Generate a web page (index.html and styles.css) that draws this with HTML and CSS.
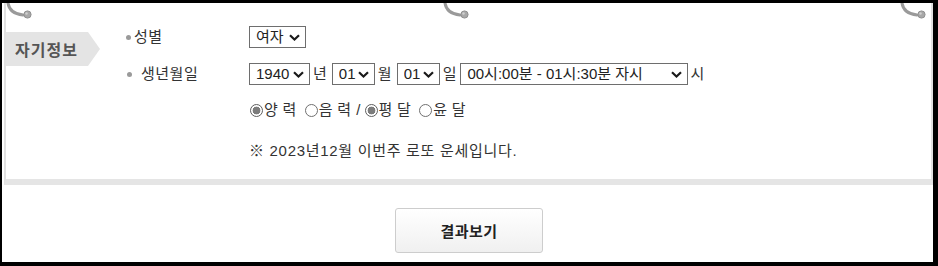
FILE: index.html
```html
<!DOCTYPE html>
<html lang="ko">
<head>
<meta charset="utf-8">
<title>자기정보</title>
<link rel="stylesheet" href="styles.css">
</head>
<body>
<div class="frame">
  <div class="panel">
    <svg class="hook hook-left" width="28" height="17" viewBox="0 0 28 17" aria-hidden="true">
      <path d="M2 0 C3 7 8 11 17 12" fill="none" stroke="#9a9a9a" stroke-width="3" stroke-linecap="round"/>
      <circle cx="21.5" cy="11.5" r="3.6" fill="#a8a8a8" stroke="#909090" stroke-width="1"/>
      <circle cx="20.5" cy="10.5" r="1.2" fill="#d0d0d0"/>
    </svg>
    <svg class="hook hook-mid" width="28" height="17" viewBox="0 0 28 17" aria-hidden="true">
      <path d="M2 0 C3 7 8 11 17 12" fill="none" stroke="#9a9a9a" stroke-width="3" stroke-linecap="round"/>
      <circle cx="21.5" cy="11.5" r="3.6" fill="#a8a8a8" stroke="#909090" stroke-width="1"/>
      <circle cx="20.5" cy="10.5" r="1.2" fill="#d0d0d0"/>
    </svg>
    <svg class="hook hook-right" width="28" height="17" viewBox="0 0 28 17" aria-hidden="true">
      <path d="M2 0 C3 7 8 11 17 12" fill="none" stroke="#9a9a9a" stroke-width="3" stroke-linecap="round"/>
      <circle cx="21.5" cy="11.5" r="3.6" fill="#a8a8a8" stroke="#909090" stroke-width="1"/>
      <circle cx="20.5" cy="10.5" r="1.2" fill="#d0d0d0"/>
    </svg>

    <div class="tab">자기정보</div>

    <div class="form">
      <div class="row row-gender">
        <div class="label"><span class="dot dot-tight"></span>성별</div>
        <div class="ctrl">
          <span class="sel sel-gender">
            <select><option>여자</option><option>남자</option></select>
            <svg class="chev" width="11" height="7" viewBox="0 0 11 7"><path d="M1 1.2 L5.5 5.5 L10 1.2" fill="none" stroke="#1a1a1a" stroke-width="2.2"/></svg>
          </span>
        </div>
      </div>

      <div class="row row-birth">
        <div class="label"><span class="dot dot-wide"></span>생년월일</div>
        <div class="ctrl">
          <span class="sel sel-year">
            <select><option>1940</option></select>
            <svg class="chev" width="11" height="7" viewBox="0 0 11 7"><path d="M1 1.2 L5.5 5.5 L10 1.2" fill="none" stroke="#1a1a1a" stroke-width="2.2"/></svg>
          </span>
          <span class="unit">년</span>
          <span class="sel sel-md">
            <select><option>01</option></select>
            <svg class="chev" width="11" height="7" viewBox="0 0 11 7"><path d="M1 1.2 L5.5 5.5 L10 1.2" fill="none" stroke="#1a1a1a" stroke-width="2.2"/></svg>
          </span>
          <span class="unit">월</span>
          <span class="sel sel-md">
            <select><option>01</option></select>
            <svg class="chev" width="11" height="7" viewBox="0 0 11 7"><path d="M1 1.2 L5.5 5.5 L10 1.2" fill="none" stroke="#1a1a1a" stroke-width="2.2"/></svg>
          </span>
          <span class="unit unit-day">일</span>
          <span class="sel sel-time">
            <select><option>00시:00분 - 01시:30분 자시</option></select>
            <svg class="chev" width="11" height="7" viewBox="0 0 11 7"><path d="M1 1.2 L5.5 5.5 L10 1.2" fill="none" stroke="#1a1a1a" stroke-width="2.2"/></svg>
          </span>
          <span class="unit unit-last">시</span>
        </div>
      </div>

      <div class="row row-radio">
        <div class="label"></div>
        <div class="ctrl">
          <label class="radio"><input type="radio" name="cal" checked>양 력</label>
          <label class="radio"><input type="radio" name="cal">음 력</label>
          <span class="slash">/</span>
          <label class="radio"><input type="radio" name="leap" checked>평 달</label>
          <label class="radio"><input type="radio" name="leap">윤 달</label>
        </div>
      </div>

      <div class="row row-note">
        <div class="label"></div>
        <div class="ctrl note">※ 2023년12월 이번주 로또 운세입니다.</div>
      </div>
    </div>
  </div>

  <div class="actions">
    <button class="btn" type="button">결과보기</button>
  </div>
</div>
</body>
</html>
```

FILE: styles.css
```css
html, body {
  margin: 0;
  padding: 0;
  background: #000;
}

body {
  font-family: "Liberation Sans", "Noto Sans CJK KR", sans-serif;
  font-size: 15px;
  color: #333;
}

.frame {
  box-sizing: border-box;
  width: 938px;
  height: 266px;
  border-top: 3px solid #000;
  border-left: 2px solid #000;
  border-right: 5px solid #000;
  border-bottom: 4px solid #000;
  background: #fff;
}

.panel {
  position: relative;
  box-sizing: border-box;
  margin-left: 2px;
  height: 182px;
  border-left: 2px solid #e1e1e1;
  border-right: 2px solid #e1e1e1;
  border-bottom: 6px solid #e5e5e5;
  display: flex;
  align-items: flex-start;
  padding-top: 23px;
}

.hook {
  position: absolute;
  top: 0;
}
.hook-left { left: 0; }
.hook-mid { left: 437px; }
.hook-right { left: 894px; }

.tab {
  box-sizing: border-box;
  width: 94px;
  height: 34px;
  margin-top: 6px;
  margin-right: 26px;
  padding-left: 9px;
  background: #e4e4e4;
  clip-path: polygon(0 0, 82px 0, 100% 50%, 82px 100%, 0 100%);
  color: #555;
  font-family: "Noto Sans CJK KR", sans-serif;
  font-weight: bold;
  font-size: 16px;
  letter-spacing: 1px;
  line-height: 34px;
  flex: none;
}

.form {
  display: flex;
  flex-direction: column;
}

.row {
  display: grid;
  grid-template-columns: 123px auto;
  align-items: center;
  height: 22px;
}
.row-birth { margin-top: 15px; }
.row-radio { margin-top: 14px; }
.row-note { margin-top: 19px; }

.label {
  display: flex;
  align-items: center;
  line-height: 22px;
  color: #333;
  letter-spacing: 0.5px;
}

.dot {
  width: 5px;
  height: 5px;
  border-radius: 50%;
  background: #9a9a9a;
  flex: none;
}
.dot-tight { margin-right: 3px; }
.dot-wide { margin-left: 1px; margin-right: 9px; }

.ctrl {
  display: flex;
  align-items: center;
  line-height: 22px;
  white-space: nowrap;
}

.sel {
  position: relative;
  display: inline-block;
  height: 22px;
}

.sel select {
  -webkit-appearance: none;
  appearance: none;
  box-sizing: border-box;
  height: 22px;
  margin: 0;
  padding: 0 18px 0 6px;
  border: 1px solid #6e6e6e;
  border-radius: 0;
  background: #fff;
  color: #222;
  font-family: "Liberation Sans", "Noto Sans CJK KR", sans-serif;
  font-size: 15px;
  line-height: 20px;
}

.sel-gender select { width: 57px; }
.sel-year select { width: 61px; }
.sel-md select { width: 43px; }
.sel-time select { width: 228px; }

.chev {
  position: absolute;
  right: 6px;
  top: 8px;
  pointer-events: none;
}

.unit {
  margin: 0 5px 0 3px;
  color: #333;
}
.unit-day { margin-right: 4px; }
.unit-last { margin: 0 0 0 2px; }

.radio {
  display: inline-flex;
  align-items: center;
  margin-right: 7px;
  color: #333;
  letter-spacing: 0.3px;
}
.radio input {
  -webkit-appearance: none;
  appearance: none;
  box-sizing: border-box;
  width: 13px;
  height: 13px;
  margin: 0 1px 0 1px;
  border: 1px solid #707070;
  border-radius: 50%;
  background: #fff;
}
.radio input:checked {
  background: radial-gradient(circle, #7c7c7c 0, #7c7c7c 3.6px, #fff 4.2px);
  border-color: #5e5e5e;
}

.slash {
  margin: 0 3px 0 -2px;
  color: #333;
}

.note {
  color: #333;
  letter-spacing: 0.7px;
}

.actions {
  display: flex;
  justify-content: center;
  padding-top: 23px;
  padding-left: 3px;
}

.btn {
  box-sizing: border-box;
  width: 148px;
  height: 45px;
  border: 1px solid #cdcdcd;
  border-radius: 3px;
  background: linear-gradient(#ffffff, #f0f0f0);
  color: #222;
  font-family: "Noto Sans CJK KR", sans-serif;
  font-size: 15px;
  font-weight: bold;
  letter-spacing: 0.5px;
  cursor: pointer;
}
```
